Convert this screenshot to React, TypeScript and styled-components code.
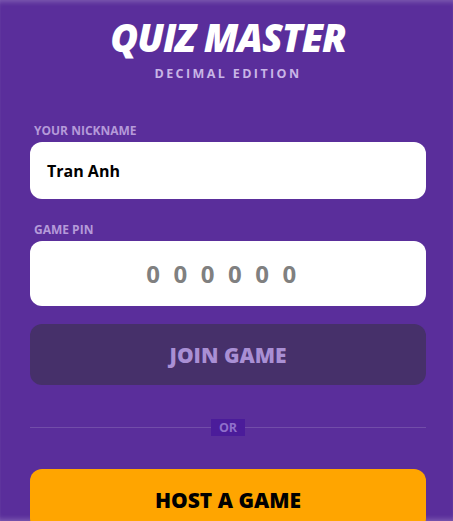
import React from "react";
import styled, { createGlobalStyle } from "styled-components";

const Global = createGlobalStyle`
  html, body { margin: 0; padding: 0; background: #5a2e9b; overflow: hidden; }
  * { box-sizing: border-box; }
`;

const Page = styled.div`
  width: 453px;
  height: 521px;
  overflow: hidden;
  background: #5a2e9b;
  box-shadow: inset 0 5px 5px -3px rgba(255, 255, 255, 0.22), inset 0 -5px 5px -3px rgba(255, 255, 255, 0.22);
  font-family: "Open Sans", "Noto Sans", sans-serif;
  display: flex;
  flex-direction: column;
  padding: 0 27px 0 30px;
`;

const Header = styled.header`
  display: flex;
  flex-direction: column;
  align-items: center;
  padding-top: 14px;
`;

const Title = styled.h1`
  margin: 0;
  font-family: "Open Sans", sans-serif;
  font-weight: 800;
  font-style: italic;
  font-size: 38px;
  line-height: 46px;
  letter-spacing: -1px;
  color: #ffffff;
`;

const Subtitle = styled.div`
  margin-top: 6px;
  font-size: 12.5px;
  font-weight: 700;
  letter-spacing: 2.4px;
  color: #c8b5e6;
  line-height: 16px;
`;

const Field = styled.div<{ $mt: number }>`
  display: flex;
  flex-direction: column;
  margin-top: ${(p) => p.$mt}px;
`;

const Label = styled.label`
  font-size: 12px;
  font-weight: 700;
  color: #b59ad9;
  padding-left: 4px;
  line-height: 14px;
  margin-bottom: 4px;
`;

const Input = styled.div<{ $h: number; $center?: boolean }>`
  height: ${(p) => p.$h}px;
  background: #ffffff;
  border-radius: 12px;
  display: flex;
  align-items: center;
  justify-content: ${(p) => (p.$center ? "center" : "flex-start")};
  padding-left: ${(p) => (p.$center ? 0 : 17)}px;
`;

const NickText = styled.span`
  font-size: 16px;
  font-weight: 700;
  color: #000;
`;

const PinText = styled.span`
  font-size: 24px;
  font-weight: 700;
  color: #808080;
  letter-spacing: 13.5px;
`;

const Button = styled.div<{ $bg: string; $fg: string; $mt: number }>`
  margin-top: ${(p) => p.$mt}px;
  height: 61px;
  flex-shrink: 0;
  border-radius: 12px;
  background: ${(p) => p.$bg};
  color: ${(p) => p.$fg};
  display: flex;
  align-items: center;
  justify-content: center;
  font-size: 21px;
  font-weight: 800;
`;

const Divider = styled.div`
  margin-top: 34px;
  display: flex;
  align-items: center;
  &::before, &::after {
    content: "";
    flex: 1;
    height: 1px;
    background: rgba(255, 255, 255, 0.15);
  }
`;

const Or = styled.span`
  background: #4b1c9a;
  color: #8f6fcb;
  font-size: 12.5px;
  font-weight: 700;
  padding: 1px 8px;
  line-height: 15px;
`;

export default function App() {
  return (
    <>
      <Global />
      <Page>
        <Header>
          <Title>QUIZ MASTER</Title>
          <Subtitle>DECIMAL EDITION</Subtitle>
        </Header>
        <Field $mt={42}>
          <Label>YOUR NICKNAME</Label>
          <Input $h={57}>
            <NickText>Tran Anh</NickText>
          </Input>
        </Field>
        <Field $mt={24}>
          <Label>GAME PIN</Label>
          <Input $h={65} $center>
            <PinText>000000</PinText>
          </Input>
        </Field>
        <Button $bg="#46306a" $fg="#a98fd4" $mt={18}>JOIN GAME</Button>
        <Divider>
          <Or>OR</Or>
        </Divider>
        <Button $bg="#ffa500" $fg="#000000" $mt={33}>HOST A GAME</Button>
      </Page>
    </>
  );
}
